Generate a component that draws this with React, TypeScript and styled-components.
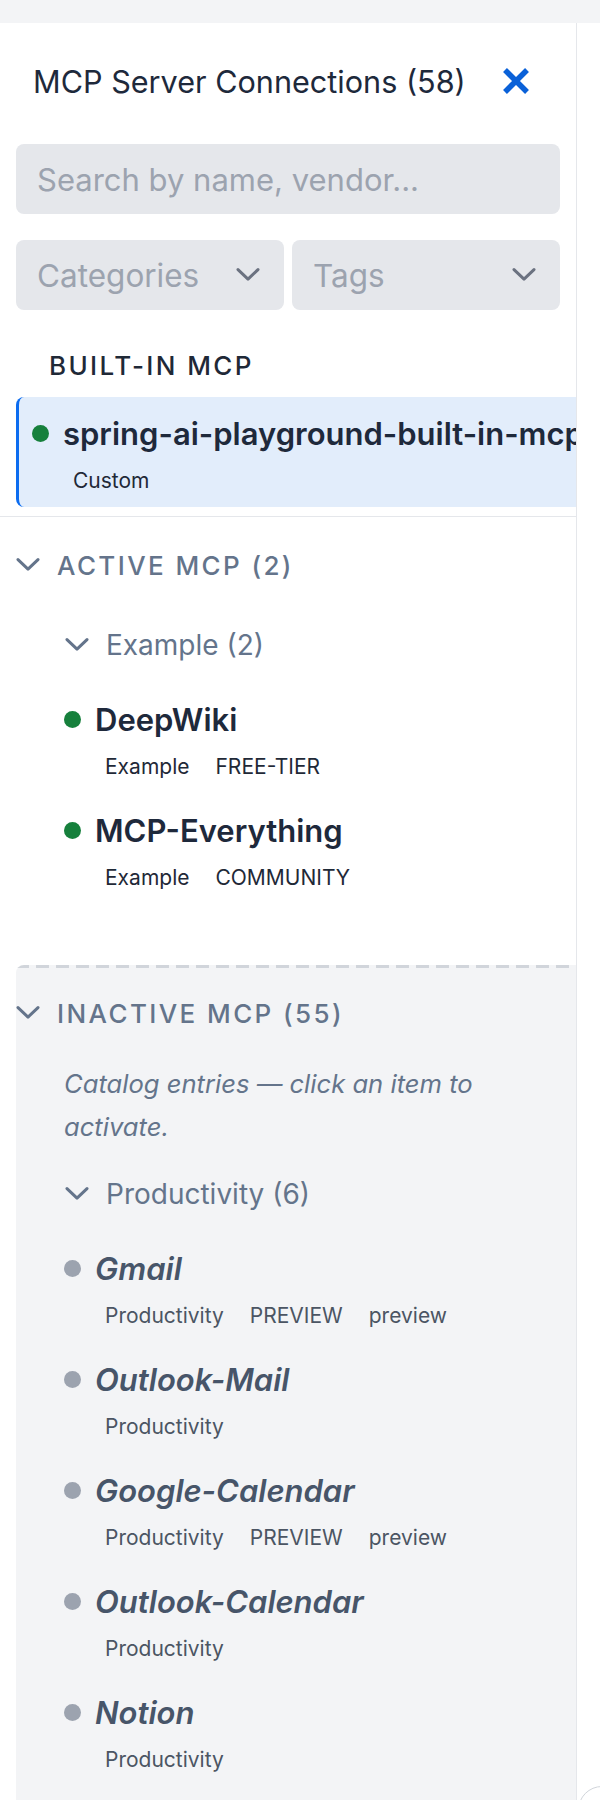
import React from 'react'
import styled, { createGlobalStyle } from 'styled-components'

const GlobalStyle = createGlobalStyle`
  html, body {
    margin: 0;
    padding: 0;
    background: #ffffff;
  }
  body {
    font-family: Inter, "Noto Sans", "Liberation Sans", sans-serif;
    color: #1e293b;
  }
  * { box-sizing: border-box; }
`

const Page = styled.div`
  position: relative;
  width: 600px;
  height: 1800px;
  overflow: hidden;
  background: #ffffff;
`

const TopStrip = styled.div`
  height: 23px;
  background: #f3f4f6;
`

const Panel = styled.aside`
  width: 577px;
  height: 1777px;
  border-right: 1px solid #e5e7eb;
  overflow: hidden;
  background: #ffffff;
`

const Header = styled.div`
  display: flex;
  align-items: center;
  justify-content: space-between;
  height: 56px;
  margin-top: 30px;
  padding: 0 40px 0 33px;
`

const Title = styled.h2`
  margin: 0;
  font-size: 30.6px;
  font-weight: 400;
  color: #1e293b;
  white-space: nowrap;
`

const CloseButton = styled.button`
  display: flex;
  align-items: center;
  justify-content: center;
  width: 40px;
  height: 40px;
  padding: 0;
  border: none;
  background: transparent;
  color: #0a61d8;
`

const Controls = styled.div`
  display: flex;
  flex-direction: column;
  gap: 26px;
  padding: 35px 16px 0 16px;
`

const SearchInput = styled.input`
  width: 100%;
  height: 70px;
  padding: 0 21px;
  border: none;
  border-radius: 8px;
  background: #e5e7eb;
  font-family: inherit;
  font-size: 31px;
  color: #1e293b;
  outline: none;
  &::placeholder {
    color: #9ca3af;
  }
`

const FilterRow = styled.div`
  display: grid;
  grid-template-columns: 1fr 1fr;
  gap: 8px;
`

const FilterSelect = styled.div`
  display: flex;
  align-items: center;
  justify-content: space-between;
  height: 70px;
  padding: 0 24px 0 21px;
  border-radius: 8px;
  background: #e5e7eb;
  font-size: 31.5px;
  color: #9ca3af;
`

const BuiltInLabel = styled.div`
  margin: 36px 0 11px 0;
  padding-left: 49px;
  height: 40px;
  line-height: 40px;
  font-size: 26px;
  font-weight: 500;
  letter-spacing: 2.4px;
  color: #1f2937;
`

const BuiltInWrap = styled.div`
  padding-left: 16px;
`

const BuiltInCard = styled.div`
  height: 110px;
  padding: 16px 0 0 13px;
  border-left: 3px solid #0b6cf0;
  border-radius: 8px 0 0 8px;
  background: #e2edfb;
`

const Divider = styled.div`
  height: 1px;
  margin-top: 9px;
  background: #e5e7eb;
`

const Section = styled.section<{ $inactive?: boolean }>`
  margin: ${p => (p.$inactive ? '73px 0 0 16px' : '28px 0 0 16px')};
  padding-top: ${p => (p.$inactive ? '28px' : '0')};
  min-height: ${p => (p.$inactive ? '900px' : '0')};
  border-top-left-radius: 8px;
  background: ${p =>
    p.$inactive
      ? 'repeating-linear-gradient(90deg, #d1d5db 0 13px, transparent 13px 20px) top left / 100% 3px no-repeat, #f3f4f6'
      : 'transparent'};
`

const SectionHeader = styled.div`
  display: flex;
  align-items: center;
  gap: 17px;
  height: 40px;
  font-size: 26px;
  font-weight: 500;
  letter-spacing: 2.4px;
  color: #64748b;
`

const Note = styled.p`
  margin: 29px 40px 0 48px;
  font-size: 25.6px;
  font-style: italic;
  line-height: 43px;
  color: #64748b;
`

const Group = styled.div<{ $first?: boolean }>`
  padding-left: 49px;
  margin-top: ${p => (p.$first ? '40px' : '26px')};
`

const GroupHeader = styled.div`
  display: flex;
  align-items: center;
  gap: 17px;
  height: 40px;
  font-size: 28px;
  color: #64748b;
`

const ItemList = styled.div`
  display: flex;
  flex-direction: column;
  gap: 29px;
  margin-top: 34px;
  margin-left: -1px;
`

const Item = styled.div``

const NameRow = styled.div`
  display: flex;
  align-items: center;
  gap: 14px;
  height: 40px;
`

const Dot = styled.span<{ $on: boolean }>`
  flex: none;
  width: 17px;
  height: 17px;
  border-radius: 50%;
  background: ${p => (p.$on ? '#16803c' : '#9ca3af')};
`

const Name = styled.span<{ $inactive?: boolean }>`
  font-size: 31px;
  font-weight: 600;
  font-style: ${p => (p.$inactive ? 'italic' : 'normal')};
  color: ${p => (p.$inactive ? '#475569' : '#1e293b')};
  white-space: nowrap;
`

const Tags = styled.div<{ $indent: number }>`
  display: flex;
  gap: 8px;
  margin-top: 14px;
  padding-left: ${p => p.$indent}px;
  height: 28px;
`

const Tag = styled.span<{ $inactive?: boolean }>`
  padding: 0 9px;
  line-height: 28px;
  font-size: 21px;
  color: ${p => (p.$inactive ? '#4b5563' : '#1f2937')};
`

const FloatingCircle = styled.div`
  position: absolute;
  left: 578px;
  top: 1786px;
  width: 48px;
  height: 48px;
  border-radius: 50%;
  border: 1.5px solid #d1d5db;
  background: #ffffff;
`

const Chevron = ({ size = 24, color = '#64748b' }: { size?: number; color?: string }) => (
  <svg width={size} height={size * 0.55} viewBox="0 0 24 13" fill="none">
    <path d="M2 1.5 L12 11 L22 1.5" stroke={color} strokeWidth="3" strokeLinecap="round" strokeLinejoin="round" />
  </svg>
)

const CloseIcon = () => (
  <svg width="28" height="28" viewBox="0 0 28 28" fill="none">
    <path d="M3 3 L25 25 M25 3 L3 25" stroke="currentColor" strokeWidth="5.5" />
  </svg>
)

type Server = { name: string; tags: string[] }

const active: Server[] = [
  { name: 'DeepWiki', tags: ['Example', 'FREE-TIER'] },
  { name: 'MCP-Everything', tags: ['Example', 'COMMUNITY'] },
]

const inactive: Server[] = [
  { name: 'Gmail', tags: ['Productivity', 'PREVIEW', 'preview'] },
  { name: 'Outlook-Mail', tags: ['Productivity'] },
  { name: 'Google-Calendar', tags: ['Productivity', 'PREVIEW', 'preview'] },
  { name: 'Outlook-Calendar', tags: ['Productivity'] },
  { name: 'Notion', tags: ['Productivity'] },
]

const ServerItem = ({ server, on }: { server: Server; on: boolean }) => (
  <Item>
    <NameRow>
      <Dot $on={on} />
      <Name $inactive={!on}>{server.name}</Name>
    </NameRow>
    <Tags $indent={32}>
      {server.tags.map(t => (
        <Tag key={t} $inactive={!on}>{t}</Tag>
      ))}
    </Tags>
  </Item>
)

const App = () => {
  return (
    <>
      <GlobalStyle />
      <Page>
        <TopStrip />
        <Panel>
          <Header>
            <Title>MCP Server Connections (58)</Title>
            <CloseButton aria-label="close">
              <CloseIcon />
            </CloseButton>
          </Header>

          <Controls>
            <SearchInput placeholder="Search by name, vendor..." />
            <FilterRow>
              <FilterSelect>
                Categories
                <Chevron color="#6b7280" />
              </FilterSelect>
              <FilterSelect>
                Tags
                <Chevron color="#6b7280" />
              </FilterSelect>
            </FilterRow>
          </Controls>

          <BuiltInLabel>BUILT-IN MCP</BuiltInLabel>
          <BuiltInWrap>
            <BuiltInCard>
              <NameRow>
                <Dot $on />
                <Name>spring-ai-playground-built-in-mcp</Name>
              </NameRow>
              <Tags $indent={32}>
                <Tag>Custom</Tag>
              </Tags>
            </BuiltInCard>
          </BuiltInWrap>
          <Divider />

          <Section>
            <SectionHeader>
              <Chevron />
              ACTIVE MCP (2)
            </SectionHeader>
            <Group $first>
              <GroupHeader>
                <Chevron />
                Example (2)
              </GroupHeader>
              <ItemList>
                {active.map(s => (
                  <ServerItem key={s.name} server={s} on />
                ))}
              </ItemList>
            </Group>
          </Section>

          <Section $inactive>
            <SectionHeader>
              <Chevron />
              INACTIVE MCP (55)
            </SectionHeader>
            <Note>Catalog entries — click an item to activate.</Note>
            <Group>
              <GroupHeader>
                <Chevron />
                Productivity (6)
              </GroupHeader>
              <ItemList>
                {inactive.map(s => (
                  <ServerItem key={s.name} server={s} on={false} />
                ))}
              </ItemList>
            </Group>
          </Section>
        </Panel>
        <FloatingCircle />
      </Page>
    </>
  )
}

export default App
